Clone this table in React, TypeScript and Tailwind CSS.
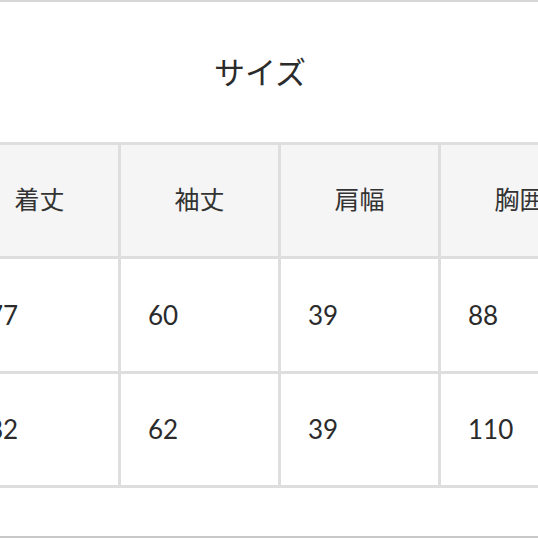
import React from "react";

const headers = ["着丈", "袖丈", "肩幅", "胸囲"];
const rows = [
  ["77", "60", "39", "88"],
  ["82", "62", "39", "110"],
];

export default function App() {
  return (
    <div
      className="w-[538px] h-[538px] overflow-hidden bg-white flex flex-col text-[#2b2b2b]"
      style={{ fontFamily: '"Lato", "Noto Sans CJK JP", sans-serif' }}
    >
      <div className="h-[2px] bg-[#d6d6d6] shrink-0" />
      <div className="h-[140px] shrink-0 flex items-center justify-center pr-[18px] pb-[4px]">
        <span className="text-[31px] leading-none" style={{ fontFamily: '"Noto Sans CJK JP", sans-serif' }}>
          サイズ
        </span>
      </div>
      <div className="ml-[-39px] w-[637px] shrink-0 grid grid-cols-[157px_157px_157px_157px] grid-rows-[111px_112px_111px] gap-[3px] py-[3px] bg-[#dedede]">
        {headers.map((h) => (
          <div
            key={h}
            className="bg-[#f5f5f5] flex items-center justify-center pb-[3px] text-[25px] text-[#333]"
            style={{ fontFamily: '"Noto Sans CJK JP", sans-serif' }}
          >
            {h}
          </div>
        ))}
        {rows.flat().map((v, i) => (
          <div key={i} className="bg-white flex items-center pl-[27px] text-[26px] text-[#2b2b2b]">
            {v}
          </div>
        ))}
      </div>
      <div className="mt-auto h-[2px] bg-[#c8c8c8] shrink-0" />
    </div>
  );
}
